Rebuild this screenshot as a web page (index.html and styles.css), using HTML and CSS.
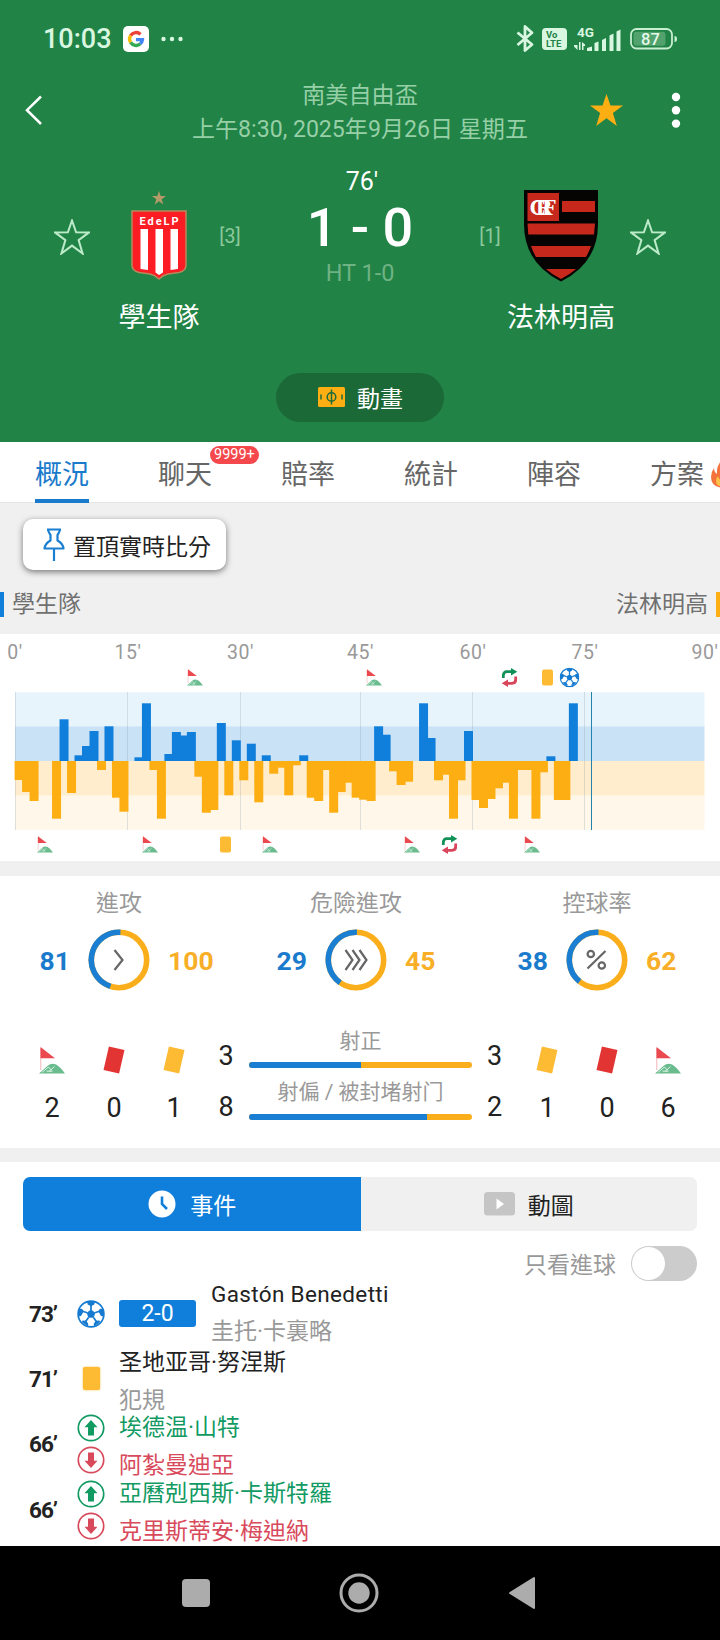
FILE: index.html
```html
<!DOCTYPE html>
<html lang="zh-Hant">

<head>
  <meta charset="UTF-8">
  <meta name="viewport" content="width=device-width, initial-scale=1.0">
  <title>學生隊 1 - 0 法林明高</title>
  <link rel="stylesheet" href="styles.css">
</head>

<body>
  <!-- shared icons -->
  <svg class="sprite" aria-hidden="true">
    <symbol id="i-star" viewBox="0 0 36 36">
      <path d="M18 1.5 22.1 13.3 35 13.4 24.6 21.1 28.6 34.5 18 26.6 7.4 34.5 11.4 21.1 1 13.4 13.9 13.3Z" />
    </symbol>
    <symbol id="i-corner" viewBox="0 0 26 27">
      <path d="M1.8 1v22" stroke="#f3b6b8" stroke-width="1" />
      <path d="M1.5 0 16 11.2H1.5Z" fill="#ea4a4f" />
      <path d="M0 26.5 9 18.5Q12.500 15.500 17 17.500 20.500 19 26 26.500Z" fill="#6abb8e" />
      <path d="M3 25.400 9.500 20l3 3.500M10 24.500l5.500-5M7.500 24.200h6" stroke="#d8f3e5" stroke-width="1" fill="none" />
    </symbol>
    <symbol id="i-ball" viewBox="0 0 28 28">
      <circle cx="14" cy="14" r="12.900" fill="#fff" stroke="#167bd0" stroke-width="1.700" />
      <path d="M14 9.600 18.300 12.700 16.700 17.700H11.300L9.700 12.700Z" fill="#167bd0" />
      <path d="M14 10V5M18 12.700l5-1.700M16.500 17.500l3.200 4.400M11.500 17.500l-3.200 4.400M10 12.700 5 11" stroke="#167bd0" stroke-width="1.700" />
      <path d="M10 1.800h8L17.300 4.500 14 6.300 10.700 4.500ZM25.800 9l1 7.500-2.800-.5-2.600-4.600 1.500-2.700ZM2.200 9l-1 7.500L4 16l2.600-4.600-1.500-2.700ZM23 22l-5.800 4.400-.5-2.600 2.200-3.100 3.600-.3ZM5 22l5.800 4.400.5-2.600-2.200-3.100-3.600-.3Z" fill="#167bd0" />
    </symbol>
    <symbol id="i-sub" viewBox="0 0 16 19">
      <path d="M1.800 10V7.500Q1.800 3.700 5.500 3.700H10" stroke="#119058" stroke-width="2.800" fill="none" />
      <path d="M9.500 0 15.800 3.700 9.500 7.500Z" fill="#119058" />
      <path d="M14.200 8.500V11.500Q14.200 15.300 10.500 15.300H6" stroke="#d9455a" stroke-width="2.800" fill="none" />
      <path d="M6.500 11.500 .2 15.300 6.500 19Z" fill="#d9455a" />
    </symbol>
    <symbol id="i-up" viewBox="0 0 28 28">
      <circle cx="14" cy="14" r="12.700" fill="#fff" stroke="currentColor" stroke-width="1.700" />
      <path d="M14 6 20.500 13.300H17V21.500H11V13.300H7.500Z" fill="currentColor" />
    </symbol>
  </svg>

  <header class="match-header">
    <div class="status-bar">
      <span class="clock">10:03</span>
      <svg class="google" width="26" height="26" viewBox="0 0 26 26">
        <rect width="26" height="26" rx="5" fill="#fff" />
        <g fill="none" stroke-width="3.400" transform="translate(13 13)">
          <path d="M-5.400-3.400A6.400 6.400 0 0 1 4.500-4.600" stroke="#ea4335" />
          <path d="M-5.400 3.400A6.400 6.400 0 0 1-5.400-3.400" stroke="#fbbc05" />
          <path d="M4.300 4.800A6.400 6.400 0 0 1-5.400 3.400" stroke="#34a853" />
          <path d="M0 .6H6.400A6.400 6.400 0 0 1 4.300 4.800" stroke="#4285f4" />
        </g>
      </svg>
      <svg width="22" height="6" fill="#d9f7e0"><circle cx="2.500" cy="3" r="2.200" /><circle cx="11" cy="3" r="2.200" /><circle cx="19.500" cy="3" r="2.200" /></svg>
      <div class="status-right">
        <svg width="20" height="30" viewBox="0 0 20 30" fill="none" stroke="#d9f7e0" stroke-width="2.800" stroke-linejoin="round">
          <path d="M1.500 8.500 16 20.500 9 26.500V2.500L16 8.700 1.500 21" />
        </svg>
        <svg width="26" height="22" class="volte">
          <rect width="25" height="22" rx="4" fill="#d9f7e0" />
          <text x="4" y="10">Vo</text>
          <text x="4" y="19">LTE</text>
        </svg>
        <svg width="48" height="26" viewBox="0 0 48 26" class="signal" fill="#d9f7e0">
          <text x="3" y="11">4G</text>
          <path d="M3.500 16v8L0 20.500V19H3.500ZM5 16h1.500v8H5ZM8 16v8h1.500v-4H11v-1.500Z" />
          <path d="M13 22l5-1.500V25H13ZM20.500 17l4-1.500V25h-4ZM28 14l4-2V25h-4ZM35.500 9.500l4-2V25h-4ZM42.500 5.500l4-2V25h-4Z" />
        </svg>
        <svg width="48" height="22" viewBox="0 0 48 22" class="battery">
          <rect x="1" y="1" width="41" height="19.500" rx="5.500" fill="none" stroke="#c9efd3" stroke-width="1.800" />
          <rect x="3.500" y="3.700" width="32" height="14" rx="3" fill="#52a26d" />
          <path d="M44.500 8q2.500 0 2.500 3t-2.500 3Z" fill="#c9efd3" />
          <text x="20.500" y="17">87</text>
        </svg>
      </div>
    </div>

    <div class="title-bar">
      <svg class="back" width="18" height="30" fill="none" stroke="#fff" stroke-width="2.500"><path d="M16 1.500 2 15.200 16 29" /></svg>
      <div class="title">
        <div>南美自由盃</div>
        <div>上午8:30, 2025年9月26日 星期五</div>
      </div>
      <svg class="fav" width="35" height="36"><use href="#i-star" fill="#fcae13" /></svg>
      <svg class="more" width="10" height="36" fill="#fff"><circle cx="5" cy="5" r="4.200" /><circle cx="5" cy="18.300" r="4.200" /><circle cx="5" cy="31.600" r="4.200" /></svg>
    </div>

    <div class="match">
      <div class="follow follow-home"><svg width="36" height="36"><use href="#i-star" /></svg></div>
      <div class="team">
        <svg width="76" height="94" viewBox="0 0 76 94">
          <path d="M38 2 39.700 7 45 7 40.700 10.200 42.300 15.500 38 12.300 33.700 15.500 35.300 10.200 31 7 36.300 7Z" fill="#b39a68" />
          <path d="M11 22H65V76Q65 82 58 83.500L47 85Q42 86 38 90 34 86 29 85L18 83.500Q11 82 11 76Z" fill="#fb1c24" stroke="#b58a5c" stroke-width="1.500" />
          <path d="M19.500 40h7.500v41l-7.500-1ZM34.500 40h7.500v43.500L38 86l-3.500-2.500ZM49.500 40H57v40l-7.500 1Z" fill="#fff" />
          <text x="38" y="36" class="crest-text" textLength="39">EdeLP</text>
        </svg>
        <div class="team-name">學生隊</div>
      </div>
      <div class="seed">[3]</div>
      <div class="score">
        <div class="minute">76'</div>
        <div class="result">1 - 0</div>
        <div class="half">HT 1-0</div>
      </div>
      <div class="seed">[1]</div>
      <div class="team">
        <svg width="76" height="94" viewBox="0 0 76 94">
          <path d="M1 1H75V35Q75 74 38 92.500 1 74 1 35Z" fill="#050403" />
          <path d="M4.500 4H36V32H4.500ZM39 12H72V23H39ZM4.500 34.500H72L71 45.500H5.300ZM8 57H68Q66 63 63 68H13Q10 63 8 57ZM23 80H53Q47 85.500 38 90 29 85.500 23 80Z" fill="#c6281b" />
          <text x="6.500" y="26" class="monogram" textLength="27">CRF</text>
        </svg>
        <div class="team-name">法林明高</div>
      </div>
      <div class="follow"><svg width="36" height="36"><use href="#i-star" /></svg></div>
    </div>

    <button class="animation-button">
      <svg width="27" height="20" viewBox="0 0 27 20">
        <rect width="27" height="20" rx="1.500" fill="#fcae13" />
        <g fill="none" stroke="#1d6b39" stroke-width="1.500"><circle cx="13.500" cy="10" r="4.300" /><path d="M13.500 2.500v15M3 7.500v5M24 7.500v5" /></g>
      </svg>
      動畫
    </button>
  </header>

  <nav class="tabs">
    <a class="tab active">概況</a>
    <a class="tab">聊天<span class="badge">9999+</span></a>
    <a class="tab">賠率</a>
    <a class="tab">統計</a>
    <a class="tab">陣容</a>
    <a class="tab">方案<svg class="flame" width="24" height="28" viewBox="0 0 24 28"><path d="M11 0Q19 6 18 12q2-1 2-4 4 5 4 10 0 9-12 10Q0 27 0 17 0 12 3 8q0 4 3 6Q5 6 11 0Z" fill="#f4733c" /><path d="M12 12q7 7 6 11-2 4-6 4-7-1-7-6 0-3 2-5 0 3 3 4-1-4 2-8Z" fill="#fcc34a" /></svg></a>
  </nav>

  <section class="pin-area">
    <button class="pin-button">
      <svg width="22" height="34" viewBox="0 0 22 34" fill="none" stroke="#1a7fd0" stroke-width="2.200" stroke-linejoin="round"><path d="M4 1.500H18M5 2Q6 5 7.500 7V12.500Q2 15.500 1.500 20.500H20.500Q20 15.500 14.500 12.500V7Q16 5 17 2M11 20.500V33" /></svg>
      置頂實時比分
    </button>
    <div class="legend">
      <span class="legend-home">學生隊</span>
      <span class="legend-away">法林明高</span>
    </div>
  </section>

  <section class="panel momentum">
    <svg width="720" height="227" viewBox="0 634 720 227">
      <g class="axis">
        <text x="15" y="658.500">0'</text><text x="128" y="658.500">15'</text><text x="240.500" y="658.500">30'</text><text x="360.500" y="658.500">45'</text>
        <text x="473" y="658.500">60'</text><text x="585" y="658.500">75'</text><text x="705" y="658.500">90'</text>
      </g>
      <rect x="15" y="692.300" width="689.500" height="34" fill="#e8f4fb" />
      <rect x="15" y="726.300" width="689.500" height="34.700" fill="#cae2f6" />
      <rect x="15" y="761" width="689.500" height="34.700" fill="#ffedcd" />
      <rect x="15" y="795.700" width="689.500" height="34" fill="#fff7e9" />
      <path d="M15.500 692V830M127.500 692V830M240.500 692V830M360.500 692V830M472.500 692V830M584.500 692V830" stroke="#8295a5" stroke-opacity=".25" />
      <g id="bars"></g>
      <path d="M591.500 692V830" stroke="#2383ac" />

      <use href="#i-corner" x="187" y="669" width="16" height="17" />
      <use href="#i-corner" x="366" y="669" width="16" height="17" />
      <use href="#i-sub" x="501.500" y="668" width="16" height="19" />
      <rect x="542" y="669.500" width="11" height="16" rx="2" fill="#fdbb34" />
      <use href="#i-ball" x="559.500" y="667.500" width="20" height="20" />

      <use href="#i-corner" x="37" y="836" width="16" height="17" />
      <use href="#i-corner" x="142" y="836" width="16" height="17" />
      <rect x="220" y="836.500" width="11" height="16" rx="2" fill="#fdbb34" />
      <use href="#i-corner" x="262" y="836" width="16" height="17" />
      <use href="#i-corner" x="404" y="836" width="16" height="17" />
      <use href="#i-sub" x="441.500" y="835" width="16" height="19" />
      <use href="#i-corner" x="524" y="836" width="16" height="17" />
    </svg>
  </section>

  <section class="panel stats">
    <div class="rings">
      <div class="ring-stat">
        <div class="ring-title">進攻</div>
        <div class="ring-row">
          <span class="home">81</span>
          <svg width="62" height="62" viewBox="0 0 62 62" class="ring">
            <circle cx="31" cy="31" r="27.700" />
            <circle cx="31" cy="31" r="27.700" class="share" pathLength="100" stroke-dasharray="45.800 100" transform="rotate(108 31 31)" />
            <path d="M26.500 21 34.500 31 26.500 41" />
          </svg>
          <span class="away">100</span>
        </div>
      </div>
      <div class="ring-stat">
        <div class="ring-title">危險進攻</div>
        <div class="ring-row">
          <span class="home">29</span>
          <svg width="62" height="62" viewBox="0 0 62 62" class="ring">
            <circle cx="31" cy="31" r="27.700" />
            <circle cx="31" cy="31" r="27.700" class="share" pathLength="100" stroke-dasharray="40.800 100" transform="rotate(125 31 31)" />
            <path d="M20.500 21 27.500 31 20.500 41M27.500 21 34.500 31 27.500 41M34.500 21 41.500 31 34.500 41" />
          </svg>
          <span class="away">45</span>
        </div>
      </div>
      <div class="ring-stat">
        <div class="ring-title">控球率</div>
        <div class="ring-row">
          <span class="home">38</span>
          <svg width="62" height="62" viewBox="0 0 62 62" class="ring">
            <circle cx="31" cy="31" r="27.700" />
            <circle cx="31" cy="31" r="27.700" class="share" pathLength="100" stroke-dasharray="40 100" transform="rotate(129 31 31)" />
            <path d="M39.500 22 21.500 39.500M28 25a3.200 3.200 0 1 0-6.400 0 3.200 3.200 0 1 0 6.400 0M39 36.500a3.200 3.200 0 1 0-6.400 0 3.200 3.200 0 1 0 6.400 0" />
          </svg>
          <span class="away">62</span>
        </div>
      </div>
    </div>

    <div class="counts">
      <div class="count"><svg width="26" height="27"><use href="#i-corner" /></svg><span>2</span></div>
      <div class="count"><i class="card red"></i><span>0</span></div>
      <div class="count"><i class="card yellow"></i><span>1</span></div>
      <div class="count shots"><span>3</span><span>8</span></div>
      <div class="bars">
        <div class="bar-label">射正</div>
        <div class="bar"><i style="width: 50%"></i></div>
        <div class="bar-label">射偏 / 被封堵射门</div>
        <div class="bar"><i style="width: 80%"></i></div>
      </div>
      <div class="count shots"><span>3</span><span>2</span></div>
      <div class="count"><i class="card yellow"></i><span>1</span></div>
      <div class="count"><i class="card red"></i><span>0</span></div>
      <div class="count"><svg width="26" height="27"><use href="#i-corner" /></svg><span>6</span></div>
    </div>
  </section>

  <section class="panel events">
    <div class="segmented">
      <button class="segment active">
        <svg width="28" height="28"><circle cx="14" cy="14" r="13.500" fill="#fff" /><path d="M14 6.500V14L19 19" stroke="#107fdb" stroke-width="2.600" fill="none" /></svg>
        事件
      </button>
      <button class="segment">
        <svg width="31" height="24"><rect width="31" height="23.500" rx="3.500" fill="#c5c5c5" /><path d="M12.500 6.500 20 12 12.500 17.500Z" fill="#fff" /></svg>
        動圖
      </button>
    </div>
    <div class="filter"><span class="filter-label">只看進球</span><span class="switch"></span></div>

    <ul class="event-list">
      <li class="event goal">
        <span class="time">73’</span>
        <span class="event-icon"><svg width="28" height="28"><use href="#i-ball" /></svg></span>
        <span class="event-score">2-0</span>
        <div class="event-text"><p class="latin">Gastón Benedetti</p><p class="muted">圭托·卡裏略</p></div>
      </li>
      <li class="event">
        <span class="time">71’</span>
        <span class="event-icon"><i class="card flat"></i></span>
        <div class="event-text"><p>圣地亚哥·努涅斯</p><p class="muted">犯規</p></div>
      </li>
      <li class="event">
        <span class="time">66’</span>
        <span class="event-icon"><svg class="in" width="28" height="28"><use href="#i-up" /></svg><svg class="out" width="28" height="28"><use href="#i-up" /></svg></span>
        <div class="event-text"><p class="in">埃德温·山特</p><p class="out">阿紮曼迪亞</p></div>
      </li>
      <li class="event">
        <span class="time">66’</span>
        <span class="event-icon"><svg class="in" width="28" height="28"><use href="#i-up" /></svg><svg class="out" width="28" height="28"><use href="#i-up" /></svg></span>
        <div class="event-text"><p class="in">亞曆剋西斯·卡斯特羅</p><p class="out">克里斯蒂安·梅迪納</p></div>
      </li>
    </ul>
  </section>

  <footer class="nav-bar">
    <svg width="28" height="28"><rect width="28" height="28" rx="4" fill="#acacac" /></svg>
    <svg width="40" height="40"><circle cx="20" cy="20" r="18" fill="none" stroke="#acacac" stroke-width="3" /><circle cx="20" cy="20" r="10.700" fill="#acacac" /></svg>
    <svg width="28" height="34"><path d="M2 17 26 2V32Z" fill="#acacac" stroke="#acacac" stroke-width="2" stroke-linejoin="round" /></svg>
  </footer>

  <script>
    // pressure per minute, positive = home, negative = away
    const pressure = [
      -19, -31, -40, 0, 0, -57.7, 41.7, -32, 5.7, 15, 30, -9, 34.7, -36.7, -50.7,
      0, 3.7, 57.7, -9, -57.7, 7, 29, 25.5, 29, -15.7, -51.7, -49, 38, -34.3, 20.7,
      -19.3, 17.3, -41.3, 5.7, -12.7, -6.7, -34.3, -4.3, 5.7, -36.7, -40, -9, -51.7, -31, -21.7,
      -36.7, -38.7, -40, 34.7, 26.3, -10.3, -24, -20.7, 0, 57.7, 23, -19.3, -13.7, -57.7, -19.3,
      30, -39, -47, -38, -27.3, -21.7, -57.7, -9, -9, -57.7, -11.3, 4.7, -39, -39, 57.7
    ];
    const bars = document.getElementById('bars');

    pressure.forEach((value, minute) => {
      if (!value) return;
      const rect = document.createElementNS('http://www.w3.org/2000/svg', 'rect');
      rect.setAttribute('x', 14.6 + minute * 7.49);
      rect.setAttribute('y', value > 0 ? 761 - value : 761);
      rect.setAttribute('width', 9);
      rect.setAttribute('height', Math.abs(value));
      rect.setAttribute('fill', value > 0 ? '#107fdb' : '#fdae12');
      bars.appendChild(rect);
    });
  </script>
</body>

</html>
```

FILE: styles.css
```css
* {
  box-sizing: border-box;
}

body {
  margin: 0;
  width: 720px;
  height: 1640px;
  overflow: hidden;
  background: #f0f0f0;
  font-family: Roboto, "Noto Sans CJK TC", sans-serif;
  font-size: 23px;
  color: #222;
}

svg {
  display: block;
  flex: none;
}

button {
  border: none;
  padding: 0;
  font: inherit;
}

.sprite {
  position: absolute;
  width: 0;
  height: 0;
}

/* header */
.match-header {
  height: 442px;
  background: #218346;
  color: #fff;
}

.status-bar {
  display: flex;
  align-items: center;
  height: 78px;
  padding: 0 42px 0 43px;
  color: #d9f7e0;
}

.clock {
  width: 80px;
  font-size: 27px;
  font-weight: 500;
}

.google {
  margin-right: 12px;
}

.status-right {
  display: flex;
  align-items: center;
  margin-left: auto;
}

.volte {
  margin: 0 6px;
  font-size: 9.5px;
  font-weight: 700;
  fill: #218346;
}

.signal {
  margin-right: 8px;
  font-size: 13.5px;
  font-weight: 700;
}

.battery {
  font-size: 16.5px;
  font-weight: 500;
  text-anchor: middle;
  fill: #e5f9ea;
}

.title-bar {
  display: grid;
  grid-template-columns: 150px 420px 71px 79px;
  align-items: center;
  height: 68px;
  margin-top: 1px;
}

.back {
  margin-left: 25px;
  margin-top: -6px;
}

.title {
  text-align: center;
  font-size: 23.1px;
  line-height: 34px;
  color: #97cfa6;
}

.fav {
  margin: -6px 0 0 19px;
}

.more {
  margin: -6px 0 0 30px;
}

.match {
  display: grid;
  grid-template-columns: 114px 90px 52px 208px 52px 90px 114px;
  padding-top: 18px;
}

.follow {
  padding: 54px 0 0 24px;
}

.follow-home {
  padding-left: 54px;
}

.follow svg {
  fill: none;
  stroke: #bdebc9;
  stroke-width: 2;
}

.team {
  display: flex;
  flex-direction: column;
  align-items: center;
  padding-top: 24px;
}

.team-name {
  margin-top: 17px;
  margin-bottom: 2px;
  font-size: 27px;
  line-height: 36px;
  white-space: nowrap;
}

.crest-text {
  font-size: 11px;
  font-weight: 700;
  fill: #fff;
  text-anchor: middle;
}

.monogram {
  font-family: "Liberation Serif", serif;
  font-size: 23px;
  font-weight: 700;
  fill: #fff;
}

.seed {
  margin-top: 60px;
  font-size: 19.5px;
  line-height: 24px;
  text-align: center;
  color: #8cc99c;
}

.score {
  text-align: center;
}

.minute {
  padding-left: 4px;
  font-size: 25px;
  line-height: 33px;
}

.result {
  font-size: 54px;
  font-weight: 500;
  line-height: 60px;
}

.half {
  font-size: 23.5px;
  line-height: 30px;
  color: #6fb283;
}

.animation-button {
  display: flex;
  align-items: center;
  gap: 12px;
  width: 168px;
  height: 49px;
  margin: 35px auto 0;
  padding: 0 0 2px 42px;
  border-radius: 25px;
  background: #1b6937;
  color: #fff;
}

/* tabs */
.tabs {
  display: flex;
  gap: 69px;
  height: 61px;
  padding-left: 35px;
  background: #fff;
  border-bottom: 1px solid #e4e4e4;
}

.tab {
  position: relative;
  flex: none;
  width: 54px;
  height: 61px;
  font-size: 27px;
  line-height: 66px;
  color: #666;
}

.tab.active {
  color: #1a7acb;
  border-bottom: 4px solid #1a7acb;
}

.badge {
  position: absolute;
  top: 4px;
  left: 52px;
  padding: 0 4px;
  border-radius: 9px;
  background: #f4484d;
  color: #fff;
  font-size: 14.5px;
  line-height: 18px;
}

.flame {
  position: absolute;
  top: 18px;
  left: 61px;
}

/* pinned score */
.pin-area {
  height: 131px;
  padding-top: 16px;
}

.pin-button {
  display: flex;
  align-items: center;
  gap: 8px;
  width: 203px;
  height: 51px;
  margin-left: 23px;
  padding-left: 20px;
  border-radius: 10px;
  background: #fff;
  box-shadow: 0 2px 6px rgba(0, 0, 0, 0.5);
  color: #222;
  white-space: nowrap;
}

.legend {
  display: flex;
  justify-content: space-between;
  margin-top: 22px;
  line-height: 25px;
  color: #707070;
}

.legend-home {
  padding-left: 8px;
  border-left: 4px solid #107fdb;
}

.legend-away {
  padding-right: 8px;
  border-right: 4px solid #fdae12;
}

.panel {
  background: #fff;
}

.momentum {
  height: 227px;
  margin-bottom: 15px;
}

.axis {
  font-size: 19.5px;
  letter-spacing: 0.5px;
  text-anchor: middle;
  fill: #999;
}

/* stats */
.stats {
  height: 272px;
  margin-bottom: 14px;
  padding-top: 11px;
}

.rings {
  display: grid;
  grid-template-columns: 238px 236px 246px;
}

.ring-title {
  line-height: 34px;
  text-align: center;
  color: #999;
}

.ring-row {
  display: flex;
  align-items: center;
  justify-content: center;
  gap: 18px;
  margin-top: 8px;
  font-size: 26.5px;
  font-weight: 700;
}

.home,
.away {
  flex: 1;
}

.home {
  text-align: right;
  color: #1a7bcd;
}

.away {
  color: #f8ae26;
}

.ring {
  fill: none;
}

.ring circle {
  stroke: #fbae1b;
  stroke-width: 5.6;
}

.ring .share {
  stroke: #1a7fd3;
}

.ring path {
  stroke: #666;
  stroke-width: 2.2;
}

.counts {
  display: grid;
  grid-template-columns: 62px 62px 58px 46px 223px 45px 60px 60px 62px;
  margin-top: 35px;
  padding: 0 21px;
}

.count {
  display: flex;
  flex-direction: column;
  align-items: center;
  padding-top: 21px;
  font-size: 27px;
  line-height: 32px;
}

.count span {
  margin-top: 18px;
}

.count .card + span {
  margin-top: 19px;
}

.shots {
  gap: 19px;
  padding-top: 14px;
}

.shots span {
  margin-top: 0;
}

.card {
  width: 16px;
  height: 24px;
  margin-top: 1px;
  margin-bottom: 1px;
  transform: rotate(13deg);
}

.red {
  background: #e33434;
}

.yellow {
  background: #fdbb34;
}

.flat {
  width: 17px;
  height: 23px;
  margin: 0;
  border-radius: 2px;
  background: #fdbb34;
  transform: none;
  box-shadow: 0 0 2px #fdbb34;
}

.bars {
  padding-top: 1px;
  font-size: 21px;
  line-height: 28px;
  text-align: center;
  color: #999;
}

.bar {
  height: 6px;
  margin: 7px 0 10px;
  border-radius: 3px;
  background: #fbae1b;
  overflow: hidden;
}

.bar i {
  display: block;
  height: 6px;
  background: #1a7fd3;
}

.bars .bar:last-child {
  margin-top: 8px;
}

/* events */
.events {
  height: 384px;
  padding: 15px 23px 0;
}

.segmented {
  display: flex;
  height: 54px;
  border-radius: 7px;
  background: #f0f0f0;
  overflow: hidden;
}

.segment {
  display: flex;
  flex: 1;
  align-items: center;
  justify-content: center;
  gap: 13px;
  background: none;
  color: #222;
}

.segment.active {
  gap: 14px;
  padding-left: 1px;
  background: #107fdb;
  color: #fff;
}

.filter {
  display: flex;
  align-items: center;
  justify-content: flex-end;
  gap: 15px;
  height: 35px;
  margin-top: 15px;
  color: #999;
}

.filter-label {
  padding-bottom: 2px;
}

.switch {
  width: 66px;
  height: 35px;
  border-radius: 18px;
  background: #ccc;
}

.switch::before {
  content: "";
  display: block;
  width: 33px;
  height: 33px;
  margin: 1px;
  border-radius: 50%;
  background: #fff;
}

.event-list {
  margin: 0;
  padding: 0;
  list-style: none;
}

.event {
  display: flex;
  align-items: center;
  height: 65.3px;
}

.time {
  width: 54px;
  padding-left: 6px;
  font-size: 22.5px;
  font-weight: 700;
  letter-spacing: -1px;
}

.event-icon {
  display: flex;
  flex-direction: column;
  align-items: center;
  gap: 4px;
  width: 28px;
  margin-right: 14px;
}

.event-score {
  width: 77px;
  margin-right: 15px;
  border-radius: 3px;
  background: #107fdb;
  color: #fff;
  font-size: 23px;
  line-height: 27px;
  text-align: center;
}

.event-text {
  padding-top: 6px;
}

.goal .event-text {
  padding: 0 0 2px;
}

.event-text p {
  margin: 0;
  line-height: 38px;
}

.latin {
  font-size: 22.5px;
  letter-spacing: 0.35px;
}

.muted {
  color: #999;
}

.in {
  color: #119a62;
}

.out {
  color: #d84a5b;
}

svg.out {
  transform: rotate(180deg);
}

/* system navigation */
.nav-bar {
  display: flex;
  align-items: center;
  justify-content: space-between;
  height: 94px;
  padding: 0 184px 0 182px;
  background: #000;
}
```
